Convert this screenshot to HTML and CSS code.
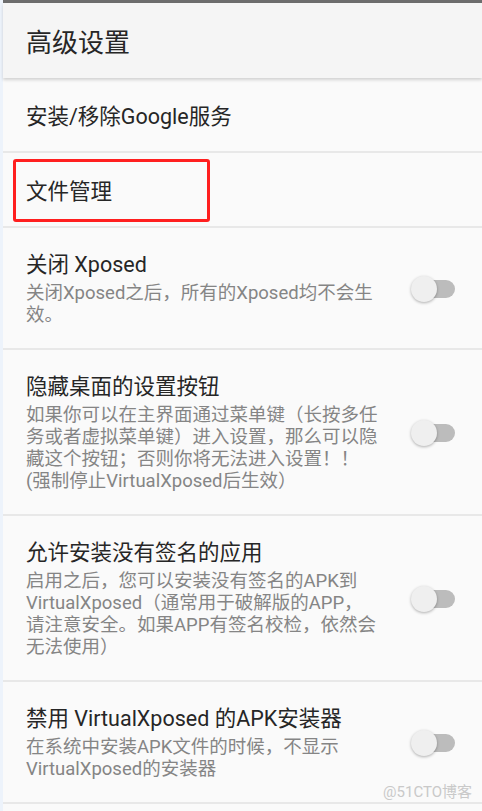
FILE: index.html
```html
<!DOCTYPE html>
<html lang="zh-CN">
<head>
<meta charset="utf-8">
<title>高级设置</title>
<link rel="stylesheet" href="styles.css">
</head>
<body>
<div class="screen">
  <div class="strip"></div>
  <div class="main">
    <div class="topbar"></div>
    <header class="header"><h1 class="header-title">高级设置</h1></header>
    <div class="list">
      <div class="row simple row-first">
        <div class="title">安装/移除Google服务</div>
      </div>
      <div class="row simple row-file">
        <div class="title">文件管理</div>
        <div class="highlight"></div>
      </div>
      <div class="row">
        <div class="text">
          <div class="title">关闭 Xposed</div>
          <div class="summary">关闭Xposed之后，所有的Xposed均不会生<br>效。</div>
        </div>
        <div class="switch"><span class="track"></span><span class="thumb"></span></div>
      </div>
      <div class="row">
        <div class="text">
          <div class="title">隐藏桌面的设置按钮</div>
          <div class="summary">如果你可以在主界面通过菜单键（长按多任<br>务或者虚拟菜单键）进入设置，那么可以隐<br>藏这个按钮；否则你将无法进入设置！！<br>(强制停止VirtualXposed后生效）</div>
        </div>
        <div class="switch"><span class="track"></span><span class="thumb"></span></div>
      </div>
      <div class="row">
        <div class="text">
          <div class="title">允许安装没有签名的应用</div>
          <div class="summary">启用之后，您可以安装没有签名的APK到<br>VirtualXposed（通常用于破解版的APP，<br>请注意安全。如果APP有签名校检，依然会<br>无法使用）</div>
        </div>
        <div class="switch"><span class="track"></span><span class="thumb"></span></div>
      </div>
      <div class="row row-last">
        <div class="text">
          <div class="title">禁用 VirtualXposed 的APK安装器</div>
          <div class="summary">在系统中安装APK文件的时候，不显示<br>VirtualXposed的安装器</div>
        </div>
        <div class="switch"><span class="track"></span><span class="thumb"></span></div>
        <div class="watermark">@51CTO博客</div>
      </div>
    </div>
  </div>
</div>
</body>
</html>
```

FILE: styles.css
```css
html, body {
  margin: 0;
  padding: 0;
  background: #fafafa;
}
body {
  font-family: Roboto, "Noto Sans CJK SC", "Noto Sans", sans-serif;
  width: 482px;
  height: 811px;
  overflow: hidden;
}
.screen {
  display: flex;
  height: 811px;
}
.strip {
  width: 3px;
  flex: none;
  background: #edf3fb;
}
.main {
  flex: 1;
  display: flex;
  flex-direction: column;
  background: #fafafa;
}
.topbar {
  height: 3px;
  background: #6d6d6d;
}
.header {
  height: 75px;
  background: #f5f5f5;
  display: flex;
  align-items: center;
  padding: 4px 0 0 23px;
  box-sizing: border-box;
  box-shadow: 0 2px 3px rgba(0, 0, 0, 0.16);
  position: relative;
  z-index: 1;
}
.header-title {
  margin: 0;
  font-size: 26px;
  font-weight: 400;
  color: #262626;
  line-height: 34px;
}
.list {
  display: flex;
  flex-direction: column;
}
.row {
  position: relative;
  display: flex;
  align-items: center;
  padding: 23px 27px 22px 23px;
  border-bottom: 2px solid #e8e8e8;
}
.row.simple {
  box-sizing: border-box;
  padding: 4px 23px 0 23px;
}
.row-first {
  height: 75px;
}
.row-file {
  height: 75px;
}
.text {
  flex: 1;
}
.title {
  font-size: 21.5px;
  line-height: 28px;
  color: #262626;
  white-space: nowrap;
}
.summary {
  margin-top: 3px;
  font-size: 18.5px;
  line-height: 22px;
  color: #858585;
  white-space: nowrap;
}
.switch {
  position: relative;
  width: 44px;
  height: 28px;
  flex: none;
}
.track {
  position: absolute;
  left: 2px;
  top: 5px;
  width: 42px;
  height: 18px;
  border-radius: 9px;
  background: #bcbcbc;
}
.thumb {
  position: absolute;
  left: 0;
  top: 1px;
  width: 26px;
  height: 26px;
  border-radius: 50%;
  background: #efefef;
  box-shadow: 0 1px 3px rgba(0, 0, 0, 0.3);
}
.highlight {
  position: absolute;
  left: 10px;
  top: 6px;
  width: 197px;
  height: 63px;
  box-sizing: border-box;
  border: 3px solid #ff1f1f;
  border-radius: 3px;
}
.watermark {
  position: absolute;
  right: 10px;
  bottom: 0;
  font-size: 15px;
  line-height: 20px;
  color: #c9c9c9;
}
```
